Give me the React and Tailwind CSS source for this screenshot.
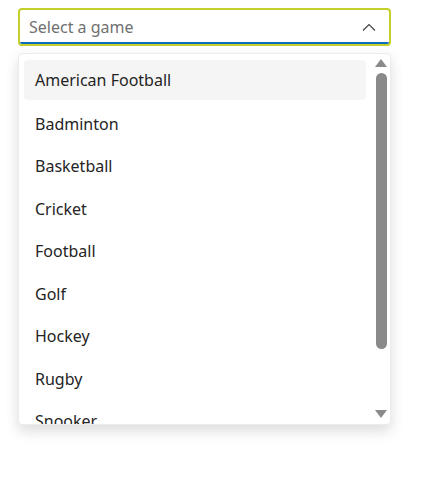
import React from 'react';

const games = ['American Football', 'Badminton', 'Basketball', 'Cricket', 'Football', 'Golf', 'Hockey', 'Rugby', 'Snooker'];

const App = () => {
  return (
    <div className="w-[441px] h-[482px] bg-white" style={{ fontFamily: '"Noto Sans", "Open Sans", sans-serif' }}>
      <div className="pt-2 pl-[18px] w-[391px]">
        {/* Combo input */}
        <div className="h-[38px] rounded-[4px] border-2 border-[#c4cf2c] overflow-hidden flex flex-col">
          <div className="flex-1 flex items-center justify-between pl-[9px] pr-[13px] pt-[2px]">
            <span className="text-[16px] text-[#707070]">Select a game</span>
            <svg width="14" height="8" viewBox="0 0 14 8" fill="none">
              <path d="M1 7.5L7 1.5L13 7.5" stroke="#424242" strokeWidth="1.2" />
            </svg>
          </div>
          <div className="h-[2px] bg-[#0f6cbd]" />
        </div>

        {/* Listbox */}
        <div className="relative mt-[7px] h-[372px] rounded-[4px] border border-[#ececec] bg-white shadow-[0_6px_14px_rgba(0,0,0,0.14)] overflow-hidden flex">
          <div className="flex-1 pl-[5px] pt-[6px] pr-[8px]">
            {games.map((g, i) => (
              <div
                key={g}
                className={
                  i === 0
                    ? 'h-[40px] mb-[2.5px] flex items-center pl-[11px] rounded-[4px] text-[16px] text-[#242424] bg-[#f5f5f5]'
                    : 'h-[42.5px] flex items-center pl-[11px] rounded-[4px] text-[16px] text-[#242424]'
                }
              >
                {g}
              </div>
            ))}
          </div>
          {/* Scrollbar */}
          <div className="w-[16px] flex flex-col items-center pt-[5px] pb-[6px] pr-[2px]">
            <svg width="12" height="8" viewBox="0 0 12 8"><path d="M6 0L12 8H0Z" fill="#8a8a8a" /></svg>
            <div className="mt-[6px] w-[11px] h-[276px] rounded-full bg-[#8a8a8a]" />
            <div className="flex-1" />
            <svg width="12" height="8" viewBox="0 0 12 8"><path d="M0 0H12L6 8Z" fill="#8a8a8a" /></svg>
          </div>
        </div>
      </div>
    </div>
  );
};

export default App;
